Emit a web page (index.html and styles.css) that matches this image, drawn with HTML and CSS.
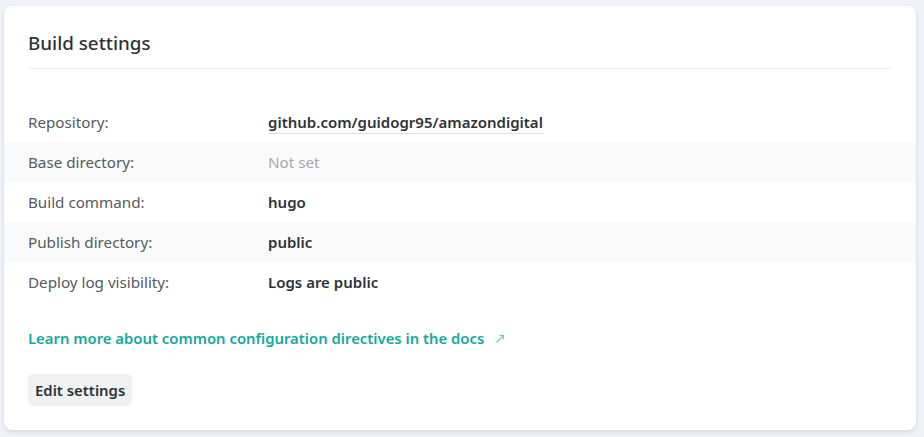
FILE: index.html
```html
<!DOCTYPE html>
<html>
<head>
<meta charset="utf-8">
<link rel="stylesheet" href="styles.css">
</head>
<body>
<div class="card">
  <div class="card-head">
    <h2 class="title">Build settings</h2>
  </div>
  <dl class="rows">
    <div class="row">
      <dt class="label">Repository:</dt>
      <dd class="value"><span class="repo">github.com/guidogr95/amazondigital</span></dd>
    </div>
    <div class="row striped">
      <dt class="label">Base directory:</dt>
      <dd class="value muted">Not set</dd>
    </div>
    <div class="row">
      <dt class="label">Build command:</dt>
      <dd class="value">hugo</dd>
    </div>
    <div class="row striped">
      <dt class="label">Publish directory:</dt>
      <dd class="value">public</dd>
    </div>
    <div class="row">
      <dt class="label">Deploy log visibility:</dt>
      <dd class="value">Logs are public</dd>
    </div>
  </dl>
  <p class="docs"><a class="link" href="#">Learn more about common configuration directives in the docs<svg class="arrow" width="10" height="10" viewBox="0 0 10 10"><path d="M1.5 8.5 L8.5 1.5 M4.5 1.5 H8.5 V5.5" fill="none" stroke="#6fc4bc" stroke-width="1.2"/></svg></a></p>
  <div class="actions"><button class="btn">Edit settings</button></div>
</div>
</body>
</html>
```

FILE: styles.css
```css
html, body {
  margin: 0;
  padding: 0;
}
body {
  background: #eff2f6;
  font-family: "Noto Sans", "Open Sans", sans-serif;
  color: #2e3338;
  padding: 6px 8px 7px 4px;
}
.card {
  background: #ffffff;
  border-radius: 8px;
  box-shadow: 0 2px 4px rgba(14, 30, 37, 0.12);
  padding: 0 0 24px 0;
  height: 424px;
  box-sizing: border-box;
}
.card-head {
  margin: 0 24px 0 24px;
  padding: 24px 0 12px 0;
  border-bottom: 1px solid #f0f0f0;
}
.title {
  margin: 0;
  font-size: 18.8px;
  font-weight: 500;
  line-height: 26px;
  color: #2e3338;
}
.rows {
  margin: 33px 0 0 0;
  padding: 0;
}
.row {
  display: flex;
  align-items: center;
  height: 40px;
  padding: 0 24px;
}
.row.striped {
  background: #fafafa;
}
.label {
  width: 240px;
  font-size: 15.2px;
  color: #545a61;
  margin: 0;
}
.value {
  margin: 0;
  font-size: 15px;
  font-weight: 600;
  color: #2e3338;
}
.value.muted {
  font-size: 15.2px;
  font-weight: 400;
  color: #a3a9ac;
}
.repo {
  border-bottom: 1px solid #dcdee0;
  padding-bottom: 1px;
}
.docs {
  margin: 26px 24px 0 24px;
  line-height: 20px;
}
.link {
  color: #15a8a0;
  text-decoration: none;
  font-size: 14.85px;
  font-weight: 600;
}
.arrow {
  margin-left: 11px;
  vertical-align: 0px;
}
.actions {
  margin: 26px 24px 0 24px;
}
.btn {
  font-family: inherit;
  font-size: 14.9px;
  font-weight: 600;
  color: #2e3338;
  background: #f0f1f2;
  border: none;
  border-radius: 5px;
  height: 32px;
  padding: 0 7px;
}
```
